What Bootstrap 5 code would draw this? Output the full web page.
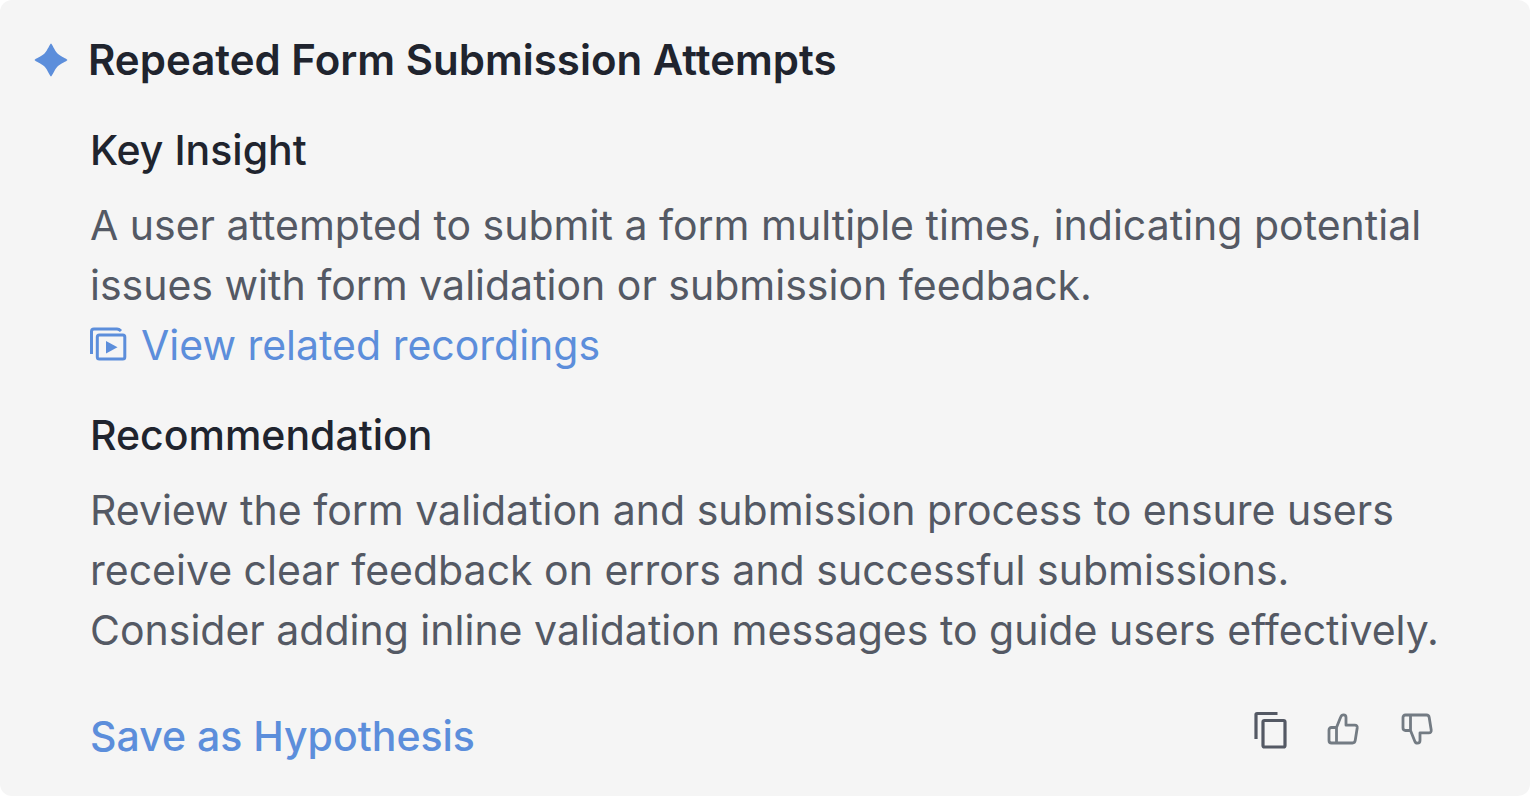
<!DOCTYPE html>
<html lang="en">
<head>
<meta charset="utf-8">
<meta name="viewport" content="width=device-width, initial-scale=1">
<title>Repeated Form Submission Attempts</title>
<link href="https://cdn.jsdelivr.net/npm/bootstrap@5.3.0/dist/css/bootstrap.min.css" rel="stylesheet">
<style>
body{font-family:Inter,"Liberation Sans",sans-serif;font-size:41px;line-height:60px;background:#fff;color:#545964}
.insight{background:#f5f5f5;border-radius:12px;padding:30px 88px 30px 34px}
.insight-title{gap:20px}
.insight-body{padding-left:56px}
h1,h2{line-height:60px;color:#20242e}
h1{font-size:42px;font-weight:600}
h2{font-size:41px;font-weight:500;margin:30px 0 15px}
.action{color:#5c8edb;font-size:41px;line-height:60px}
.action-link{gap:14px}
.save{font-weight:500}
.insight-footer{margin-top:46px}
.tools{gap:24px}
.tool{width:50px;height:46px;color:#545964}
.tool-vote{color:#737b83}
</style>
</head>
<body>
<main class="insight">
  <header class="insight-title d-flex align-items-center">
    <svg class="flex-shrink-0" width="34" height="34" viewBox="0 0 34 34" aria-hidden="true"><path d="M17 .5C18.500 1.500 20 6.500 23.500 10.500C27.500 14 32.500 15.500 33.500 17C32.500 18.500 27.500 20 23.500 23.500C20 27.500 18.500 32.500 17 33.500C15.500 32.500 14 27.500 10.500 23.500C6.500 20 1.500 18.500 .5 17C1.500 15.500 6.500 14 10.500 10.500C14 6.500 15.500 1.500 17 .5Z" fill="#5c8edb"/></svg>
    <h1 class="mb-0">Repeated Form Submission Attempts</h1>
  </header>
  <div class="insight-body">
    <section>
      <h2>Key Insight</h2>
      <p class="mb-0">A user attempted to submit a form multiple times, indicating potential issues with form validation or submission feedback.</p>
      <a class="action action-link d-flex align-items-center text-decoration-none" href="#">
        <svg class="flex-shrink-0" width="37" height="36" viewBox="0 0 37 36" fill="none" stroke="currentColor" stroke-width="3" aria-hidden="true"><path d="M1.500 27V4.500Q1.500 2 4 2H27Q29 2 31 4"/><rect x="7.300" y="8" width="27.500" height="24" rx="2"/><path d="M16 14V26.500L27.500 20.200Z" fill="currentColor" stroke="none"/></svg>
        <span>View related recordings</span>
      </a>
    </section>
    <section>
      <h2>Recommendation</h2>
      <p class="mb-0">Review the form validation and submission process to ensure users receive clear feedback on errors and successful submissions. Consider adding inline validation messages to guide users effectively.</p>
    </section>
    <footer class="insight-footer d-flex justify-content-between align-items-start">
      <button type="button" class="save action btn p-0 border-0">Save as Hypothesis</button>
      <div class="tools d-flex">
        <button type="button" class="tool btn p-0 border-0 d-flex align-items-center justify-content-center" aria-label="Copy">
          <svg width="38" height="40" viewBox="-4 0 38 40" fill="none" stroke="currentColor" stroke-width="3.200" aria-hidden="true"><path d="M2 30V5.500Q2 4.500 3 4.500H23.500"/><rect x="9" y="11.500" width="22" height="26.500" rx="1.500"/></svg>
        </button>
        <button type="button" class="tool tool-vote btn p-0 border-0 d-flex align-items-center justify-content-center" aria-label="Helpful">
          <svg width="32" height="32" viewBox="0 0 32 32" fill="none" stroke="currentColor" stroke-width="2.800" stroke-linejoin="round" aria-hidden="true"><path d="M9.500 14.500H4.500Q2 14.500 2 17V27.500Q2 30 4.500 30H25.500Q27.800 30 28.200 27.600L30.200 15Q30.500 12.200 27.800 12.200H19V4.500Q19 1.800 16.500 1.800Q14.500 1.800 13.800 3.800L9.500 14.500V30"/></svg>
        </button>
        <button type="button" class="tool tool-vote btn p-0 border-0 d-flex align-items-center justify-content-center" aria-label="Not helpful">
          <svg width="32" height="32" viewBox="0 0 32 32" fill="none" stroke="currentColor" stroke-width="2.800" stroke-linejoin="round" aria-hidden="true"><path d="M9.500 17.500H4.500Q2 17.500 2 15V4.500Q2 2 4.500 2H25.500Q27.800 2 28.200 4.400L30.200 17Q30.500 19.800 27.800 19.800H19V27.500Q19 30.200 16.500 30.200Q14.500 30.200 13.800 28.200L9.500 17.500V2"/></svg>
        </button>
      </div>
    </footer>
  </div>
</main>
<script src="https://cdn.jsdelivr.net/npm/bootstrap@5.3.0/dist/js/bootstrap.bundle.min.js"></script>
</body>
</html>
